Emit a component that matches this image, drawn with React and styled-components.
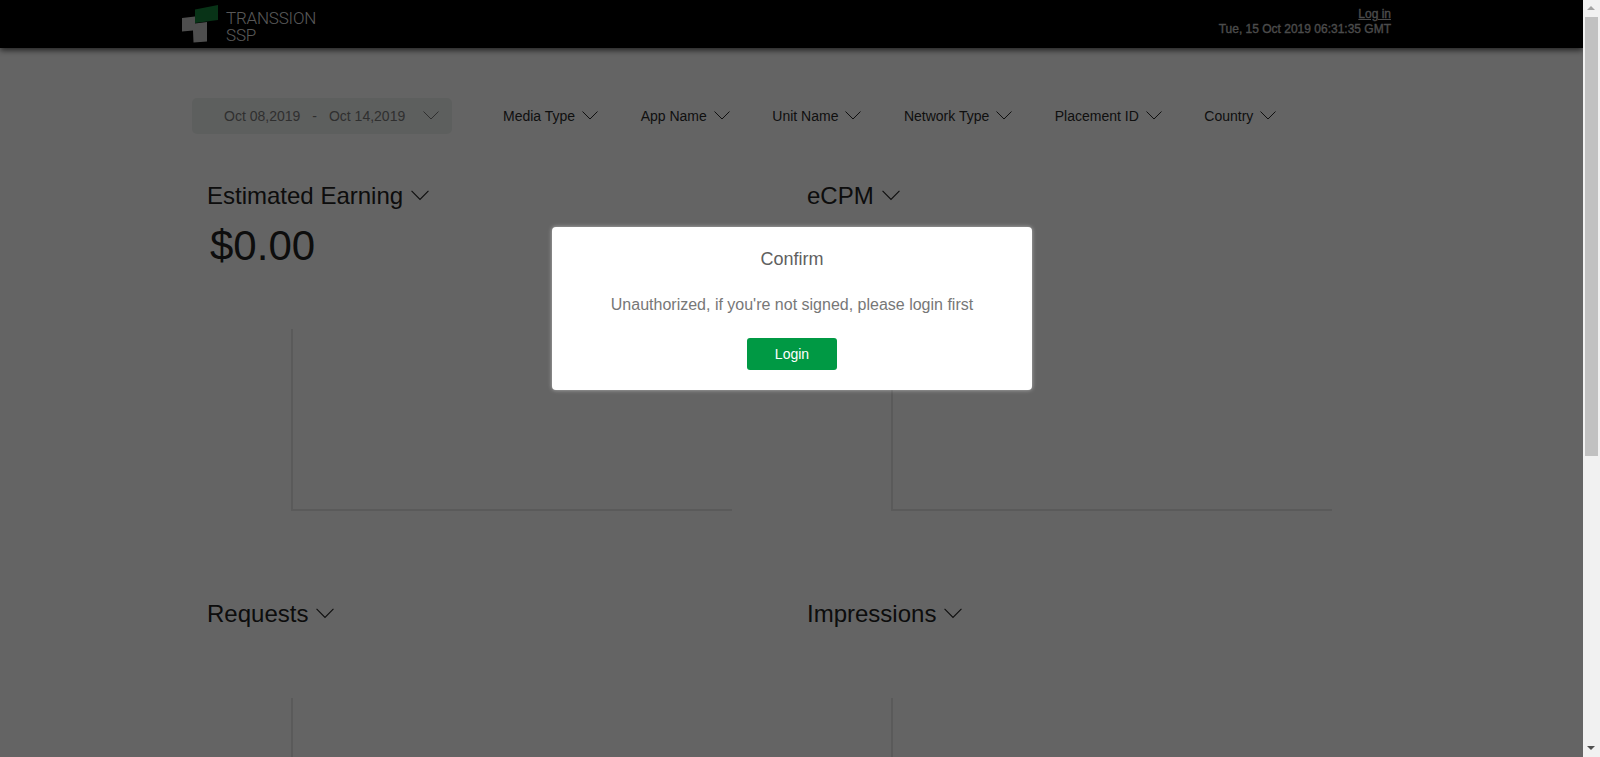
import styled, { createGlobalStyle } from "styled-components";

const FILTERS = [
  "Media Type",
  "App Name",
  "Unit Name",
  "Network Type",
  "Placement ID",
  "Country",
];

function Chevron({ size = 16 }) {
  return (
    <svg width={size} height={size} viewBox="0 0 16 16" fill="none">
      <path d="M0.5 3.5 L8 11 L15.5 3.5" stroke="currentColor" strokeWidth="1" />
    </svg>
  );
}

function Logo() {
  return (
    <svg width="38" height="38" viewBox="0 0 38 38">
      <path
        d="M0 13 L13 11.6 L13 18.6 L25 17 L25 36.5 L11.5 37.6 L11 25.6 L0 26.6 Z"
        fill="#c4c4c4"
      />
      <path d="M13 4.5 L36 0 L36 15 L13 18 Z" fill="#14803a" />
    </svg>
  );
}

function Metric({ title, value, reserveValue }) {
  return (
    <MetricBlock>
      <MetricTitle>
        {title}
        <Chevron size={18} />
      </MetricTitle>
      {reserveValue && <MetricValue>{value}</MetricValue>}
      <Axis />
    </MetricBlock>
  );
}

export default function App() {
  return (
    <Shell>
      <GlobalStyle />
      <Page>
        <Header>
          <Brand>
            <Logo />
            <BrandName>
              TRANSSION
              <br />
              SSP
            </BrandName>
          </Brand>
          <Session>
            <LogIn href="#">Log in</LogIn>
            <span>Tue, 15 Oct 2019 06:31:35 GMT</span>
          </Session>
        </Header>

        <Filters>
          <DateRange>
            <DateText>Oct 08,2019</DateText>
            <DateDash>-</DateDash>
            <DateText>Oct 14,2019</DateText>
            <DateChevron>
              <Chevron />
            </DateChevron>
          </DateRange>
          <FilterList>
            {FILTERS.map((name) => (
              <Filter key={name}>
                {name}
                <Chevron />
              </Filter>
            ))}
          </FilterList>
        </Filters>

        <Metrics>
          <Metric title="Estimated Earning" value="$0.00" reserveValue />
          <Metric title="eCPM" reserveValue />
          <Metric title="Requests" />
          <Metric title="Impressions" />
        </Metrics>

        <Overlay>
          <Dialog>
            <DialogTitle>Confirm</DialogTitle>
            <DialogText>
              Unauthorized, if you're not signed, please login first
            </DialogText>
            <LoginButton>Login</LoginButton>
          </Dialog>
        </Overlay>
      </Page>

      <Scrollbar>
        <ScrollArrow $dir="up" />
        <ScrollTrack>
          <ScrollThumb />
        </ScrollTrack>
        <ScrollArrow $dir="down" />
      </Scrollbar>
    </Shell>
  );
}

const GlobalStyle = createGlobalStyle`
  html, body {
    margin: 0;
    height: 100%;
    overflow: hidden;
    font-family: "Liberation Sans", Arial, sans-serif;
  }
`;

const Shell = styled.div`
  display: flex;
  width: 1600px;
  height: 757px;
  overflow: hidden;
`;

const Page = styled.div`
  position: relative;
  width: 1583px;
  height: 757px;
  overflow: hidden;
  background: #fafafa;
`;

const Header = styled.header`
  display: flex;
  align-items: flex-start;
  justify-content: space-between;
  height: 48px;
  padding: 0 192px 0 182px;
  background: #000;
  box-shadow: 0 2px 6px rgba(0, 0, 0, 0.7);
`;

const Brand = styled.div`
  display: flex;
  align-items: flex-start;
  gap: 6px;
  padding-top: 5px;
`;

const BrandName = styled.div`
  margin-top: 5px;
  font-family: Roboto, sans-serif;
  font-size: 17px;
  font-weight: 300;
  line-height: 17px;
  letter-spacing: -0.2px;
  color: #ddd;
`;

const Session = styled.div`
  display: flex;
  flex-direction: column;
  align-items: flex-end;
  padding-top: 7px;
  font-size: 12px;
  line-height: 15px;
  color: #bcbcbc;
  -webkit-text-stroke: 0.35px #bcbcbc;
`;

const LogIn = styled.a`
  color: inherit;
  text-decoration: underline;
`;

const Filters = styled.div`
  display: flex;
  align-items: center;
  height: 36px;
  margin-top: 50px;
  padding-left: 192px;
  font-size: 14px;
`;

const DateRange = styled.div`
  display: flex;
  align-items: center;
  width: 260px;
  height: 36px;
  padding-left: 32px;
  box-sizing: border-box;
  border-radius: 5px;
  background: #e9edeb;
  color: #777;
`;

const DateText = styled.span`
  white-space: nowrap;
`;

const DateDash = styled.span`
  margin: 0 12px;
`;

const DateChevron = styled.span`
  display: flex;
  margin-left: 18px;
`;

const FilterList = styled.div`
  display: flex;
  align-items: center;
  margin-left: 51px;
`;

const Filter = styled.div`
  display: flex;
  align-items: center;
  gap: 7px;
  margin-right: 42.5px;
  color: #2a2a2a;
  white-space: nowrap;
`;

const Metrics = styled.div`
  display: grid;
  grid-template-columns: 600px 600px;
  grid-auto-rows: 418px;
  margin-top: 44px;
  padding-left: 207px;
`;

const MetricBlock = styled.section`
  display: flex;
  flex-direction: column;
  align-items: flex-start;
`;

const MetricTitle = styled.h2`
  display: flex;
  align-items: center;
  gap: 8px;
  height: 36px;
  margin: 0;
  font-size: 24px;
  font-weight: 400;
  color: #222;
`;

const MetricValue = styled.div`
  height: 42px;
  margin: 7px 0 0 3px;
  font-size: 42px;
  line-height: 50px;
  color: #222;
`;

const Axis = styled.div`
  flex: 0 0 auto;
  width: 441px;
  height: 182px;
  margin: 66px 0 0 84px;
  box-sizing: border-box;
  border-left: 2px solid #e2e2e2;
  border-bottom: 2px solid #e2e2e2;
`;

const Overlay = styled.div`
  position: absolute;
  inset: 0;
  display: flex;
  justify-content: center;
  align-items: flex-start;
  padding: 227px 0 0 1px;
  background: rgba(0, 0, 0, 0.6);
`;

const Dialog = styled.div`
  display: flex;
  flex-direction: column;
  align-items: center;
  width: 480px;
  height: 163px;
  border-radius: 4px;
  background: #fff;
  box-shadow: 0 0 4px rgba(255, 255, 255, 0.5);
`;

const DialogTitle = styled.div`
  margin-top: 22px;
  font-size: 18px;
  line-height: 20px;
  color: #606060;
`;

const DialogText = styled.div`
  margin-top: 26px;
  font-size: 16px;
  line-height: 20px;
  color: #777;
`;

const LoginButton = styled.button`
  width: 90px;
  height: 32px;
  margin-top: 23px;
  padding: 0;
  border: none;
  border-radius: 3px;
  background: #009944;
  color: #fff;
  font-family: inherit;
  font-size: 14px;
`;

const Scrollbar = styled.aside`
  display: flex;
  flex-direction: column;
  width: 17px;
  height: 757px;
  background: #f1f1f1;
`;

const ScrollArrow = styled.div`
  position: relative;
  flex: 0 0 17px;

  &::after {
    content: "";
    position: absolute;
    left: 4px;
    top: 6px;
    border-left: 4px solid transparent;
    border-right: 4px solid transparent;
    ${(p) =>
      p.$dir === "up"
        ? "border-bottom: 4px solid #a3a3a3;"
        : "border-top: 4px solid #505050;"}
  }
`;

const ScrollTrack = styled.div`
  flex: 1;
`;

const ScrollThumb = styled.div`
  width: 13px;
  height: 439px;
  margin-left: 2px;
  background: #c1c1c1;
`;
